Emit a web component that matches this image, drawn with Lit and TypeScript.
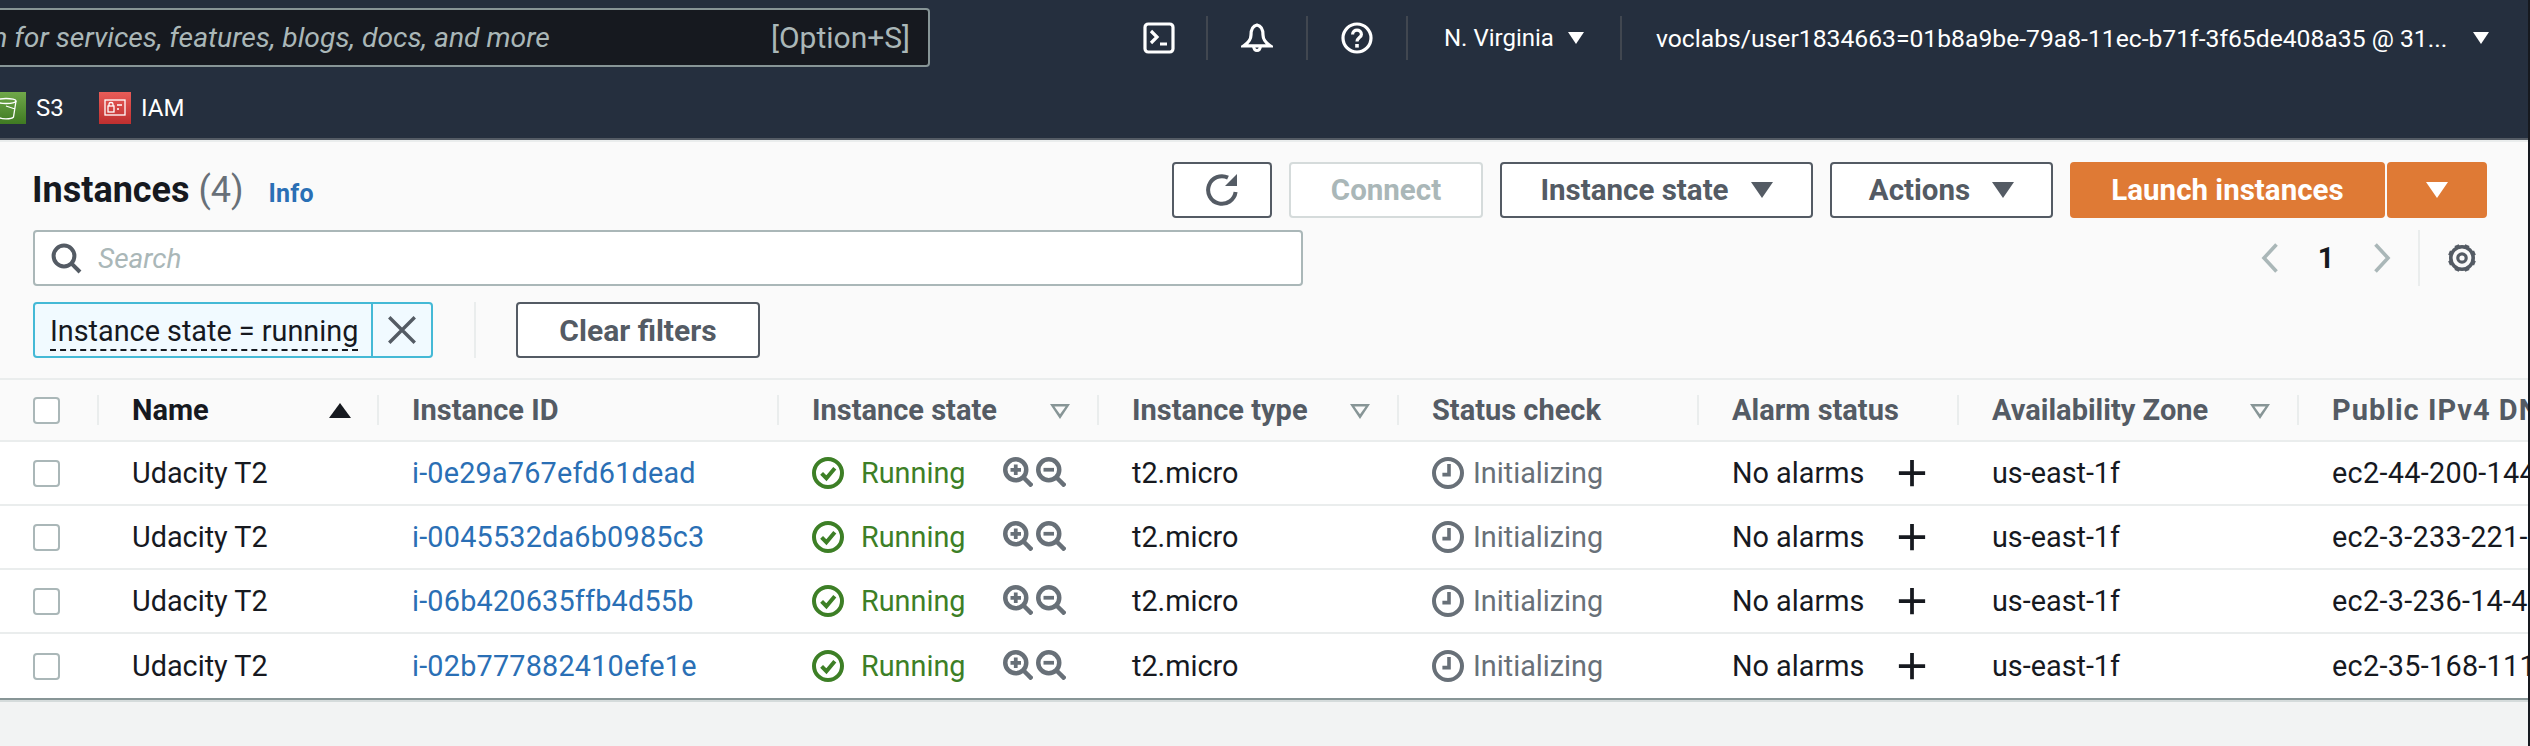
import { LitElement, css, html, svg } from 'lit'
import { customElement } from 'lit/decorators.js'

type Instance = {
  id: string;
  dns: string;
}

const instances: Instance[] = [
  { id: 'i-0e29a767efd61dead', dns: 'ec2-44-200-144-21.compute-1.amazonaws.com' },
  { id: 'i-0045532da6b0985c3', dns: 'ec2-3-233-221-84.compute-1.amazonaws.com' },
  { id: 'i-06b420635ffb4d55b', dns: 'ec2-3-236-14-47.compute-1.amazonaws.com' },
  { id: 'i-02b777882410efe1e', dns: 'ec2-35-168-111-9.compute-1.amazonaws.com' },
];

const icon = (body: unknown, cls = 'icon') => html`<svg class=${cls} viewBox="0 0 16 16" fill="none" stroke="currentColor" stroke-width="1.6">${body}</svg>`;

const terminalIcon = () => icon(svg`<rect x="1" y="1" width="14" height="14" rx="1.6"/><path d="M4 4.5 7 7.5 4 10.500M8.500 11H12"/>`);
const bellIcon = () => icon(svg`<path d="M8 1.500C5.600 2 5 4 5 6.500c0 2-1.200 3.800-3.600 5.400h13.200C12.200 10.300 11 8.500 11 6.500 11 4 10.400 2 8 1.500ZM6.300 12c0 3 3.400 3 3.400 0"/>`);
const helpIcon = () => icon(svg`<circle cx="8" cy="8" r="7"/><path d="M5.800 6.200C5.800 3.400 10.200 3.400 10.200 6.200 10.200 7.800 8 7.800 8 9.800"/><path d="M8 11v1.800" stroke-width="1.800"/>`);
const searchIcon = () => icon(svg`<circle cx="7" cy="7" r="5.200" stroke-width="2"/><path d="M10.800 10.800 15 15" stroke-width="2"/>`);
const refreshIcon = () => icon(svg`<path d="M14.800 9A6.900 6.900 0 1 1 11 1.800" stroke-width="2"/><path d="M15.500 0v6h-6Z" fill="currentColor" stroke="none"/>`);
const closeIcon = () => icon(svg`<path d="M2 2 14 14M14 2 2 14"/>`);
const gearTeeth = [22.5, 67.5, 112.5, 157.5, 202.5, 247.5, 292.5, 337.5].map(deg => {
  const a = deg * Math.PI / 180;
  return svg`<path d="M${8 + 5.5 * Math.cos(a)} ${8 + 5.5 * Math.sin(a)}L${8 + 7 * Math.cos(a)} ${8 + 7 * Math.sin(a)}" stroke-width="2.300"/>`;
});
const gearIcon = () => icon(svg`<circle cx="8" cy="8" r="5.600" stroke-width="1.800"/><circle cx="8" cy="8" r="2.100" stroke-width="1.600"/>${gearTeeth}`);
const checkIcon = () => icon(svg`<circle cx="8" cy="8" r="7" stroke-width="2"/><path d="M4.800 8.200 7.200 10.600 11.400 5.600" stroke-width="2"/>`);
const clockIcon = () => icon(svg`<circle cx="8" cy="8" r="7" stroke-width="2"/><path d="M8.500 3.500V8.800H5.200" stroke-width="1.800"/>`);
const zoomIn = () => icon(svg`<circle cx="6.800" cy="6.800" r="5.600" stroke-width="2.400"/><path d="M10.800 10.800 15.500 15.500" stroke-width="2.400"/><path d="M4 6.800h5.600M6.800 4v5.600" stroke-width="2"/>`, 'zoom');
const zoomOut = () => icon(svg`<circle cx="6.800" cy="6.800" r="5.600" stroke-width="2.400"/><path d="M10.800 10.800 15.500 15.500" stroke-width="2.400"/><path d="M4 6.800h5.600" stroke-width="2"/>`, 'zoom');
const plusIcon = () => icon(svg`<path d="M8 1v14M1 8h14" stroke-width="2"/>`, 'plus');
const chevron = (d: string) => html`<svg class="chev" viewBox="0 0 20 32" fill="none" stroke="currentColor" stroke-width="3.600"><path d=${d}/></svg>`;

const s3Icon = svg`<svg class="svc" viewBox="0 0 32 32" fill="none" stroke="#fff" stroke-width="1.300"><ellipse cx="14" cy="9" rx="10" ry="2.500"/><path d="M4 9l2.500 16c2 2.500 13 2.500 15 0L24 9M14 14l9 3"/></svg>`;
const iamIcon = svg`<svg class="svc" viewBox="0 0 32 32" fill="none" stroke="#fff" stroke-width="1.300"><rect x="6" y="8" width="20" height="15"/><rect x="9" y="14" width="6" height="6"/><path d="M10 14v-2c0-2 4-2 4 0v2M18 13h5M18 17h2"/></svg>`;

@customElement('app-root')
export default class AppRoot extends LitElement {
  render() {
    return html`
    <header>
      <div class="top">
        <div class="search-box">
          <span class="placeholder">Search for services, features, blogs, docs, and more</span>
          <span class="shortcut">[Option+S]</span>
        </div>
        <div class="nav">
          <span class="nav-icon">${terminalIcon()}</span>
          <span class="nav-icon">${bellIcon()}</span>
          <span class="nav-icon">${helpIcon()}</span>
          <span class="region">N. Virginia <i class="caret small"></i></span>
          <span class="user">voclabs/user1834663=01b8a9be-79a8-11ec-b71f-3f65de408a35 @ 31... <i class="caret small"></i></span>
        </div>
      </div>
      <div class="shortcuts">
        <span class="svc-wrap s3">${s3Icon}</span><span class="svc-name s3-name">S3</span>
        <span class="svc-wrap iam">${iamIcon}</span><span class="svc-name">IAM</span>
      </div>
    </header>
    <main>
      <div class="toolbar">
        <h1>Instances <span class="count">(4)</span></h1>
        <a class="info">Info</a>
        <div class="actions">
          <button class="refresh">${refreshIcon()}</button>
          <button class="disabled connect">Connect</button>
          <button class="state">Instance state <i class="caret"></i></button>
          <button class="acts">Actions <i class="caret"></i></button>
          <button class="primary launch">Launch instances</button>
          <button class="primary more"><i class="caret"></i></button>
        </div>
      </div>
      <div class="search-row">
        <div class="search">${searchIcon()}<span>Search</span></div>
        <div class="pager">
          <span class="chev-wrap">${chevron('M16.500 2.500 4 16l12.500 13.500')}</span>
          <span class="page">1</span>
          <span class="chev-wrap">${chevron('M3.500 2.500 16 16 3.500 29.500')}</span>
          <span class="gear">${gearIcon()}</span>
        </div>
      </div>
      <div class="filter-row">
        <div class="token">
          <span class="token-label"><span>Instance state = running</span></span>
          <span class="token-x">${closeIcon()}</span>
        </div>
        <span class="filter-div"></span>
        <button class="clear">Clear filters</button>
      </div>
      <div class="table">
        <div class="row head">
          <div class="cell"><span class="box"></span></div>
          <div class="cell strong">Name<i class="sort"></i></div>
          <div class="cell">Instance ID</div>
          <div class="cell">Instance state<i class="tri"></i></div>
          <div class="cell">Instance type<i class="tri"></i></div>
          <div class="cell">Status check</div>
          <div class="cell">Alarm status</div>
          <div class="cell">Availability Zone<i class="tri"></i></div>
          <div class="cell wide">Public IPv4 DNS</div>
        </div>
        ${instances.map(item => html`
        <div class="row">
          <div class="cell"><span class="box"></span></div>
          <div class="cell">Udacity T2</div>
          <div class="cell"><a>${item.id}</a></div>
          <div class="cell running">${checkIcon()}<span>Running</span><span class="zooms">${zoomIn()}${zoomOut()}</span></div>
          <div class="cell">t2.micro</div>
          <div class="cell pending">${clockIcon()}<span>Initializing</span></div>
          <div class="cell">No alarms${plusIcon()}</div>
          <div class="cell">us-east-1f</div>
          <div class="cell dns">${item.dns}</div>
        </div>
        `)}
      </div>
    </main>
    `
  }

  static styles = css`
:host {
  display: block;
  box-sizing: border-box;
  width: 2530px;
  height: 746px;
  overflow: hidden;
  background: #f2f3f3;
  border-right: 2px solid #16191f;
  font-family: Roboto, sans-serif;
  font-size: 28.8px;
  color: #16191f;
}
* {
  box-sizing: border-box;
}
i {
  display: inline-block;
}
.icon {
  width: 32px;
  height: 32px;
  flex: none;
}
header {
  height: 142px;
  background: #252f3e;
  border-bottom: 2px solid #eaeded;
  box-shadow: inset 0 -2px 0 #545b64;
  padding-bottom: 4px;
}
.top {
  display: flex;
  align-items: flex-start;
  padding-top: 8px;
}
.search-box {
  width: 930px;
  height: 59px;
  background: #16191f;
  border: 2px solid #879596;
  border-left: none;
  border-radius: 0 4px 4px 0;
  display: flex;
  justify-content: space-between;
  align-items: center;
  padding: 0 18px 0 0;
  color: #aab7b8;
  overflow: hidden;
  white-space: nowrap;
}
.placeholder {
  font-style: italic;
  font-size: 28.3px;
  margin-left: -77px;
}
.shortcut {
  font-size: 30px;
}
.nav {
  display: flex;
  align-items: center;
  color: #fff;
  margin-left: 213px;
  margin-top: 8px;
  height: 44px;
  font-size: 24px;
}
.nav-icon {
  width: 100px;
  height: 44px;
  display: flex;
  justify-content: center;
  align-items: center;
  border-right: 2px solid #414750;
}
.nav-icon:first-child {
  width: 65px;
  justify-content: flex-start;
}
.region {
  width: 214px;
  padding-left: 36px;
  border-right: 2px solid #414750;
  height: 44px;
  display: flex;
  align-items: center;
  gap: 14px;
  white-space: nowrap;
}
.user {
  padding-left: 34px;
  display: flex;
  align-items: center;
  gap: 26px;
  white-space: nowrap;
  font-size: 24.7px;
}
.caret {
  width: 0;
  height: 0;
  border-left: 11px solid transparent;
  border-right: 11px solid transparent;
  border-top: 16px solid currentColor;
}
.caret.small {
  border-left-width: 8px;
  border-right-width: 8px;
  border-top-width: 12px;
}
.shortcuts {
  display: flex;
  align-items: center;
  margin-top: 25px;
  height: 32px;
  color: #fff;
  font-size: 24px;
}
.svc-wrap {
  width: 32px;
  height: 32px;
  flex: none;
  overflow: hidden;
}
.svc-wrap.s3 {
  width: 26px;
  background: linear-gradient(#70a84a, #3f7a22);
}
.svc-wrap.iam {
  background: linear-gradient(#e85c58, #bf2f2f);
}
.svc {
  display: block;
  width: 32px;
  height: 32px;
}
.s3 .svc {
  margin-left: -8px;
}
.svc-name {
  margin-left: 10px;
}
.s3-name {
  width: 63px;
}
main {
  background: #fafafa;
  display: flex;
  flex-direction: column;
  padding-top: 20px;
}
.toolbar {
  display: flex;
  align-items: center;
  height: 56px;
  padding: 0 41px 0 32px;
}
h1 {
  margin: 0;
  font-size: 36px;
  font-weight: 700;
  line-height: 56px;
  white-space: nowrap;
}
.count {
  font-weight: 400;
  color: #687078;
}
.info {
  margin-left: 25px;
  margin-top: 6px;
  color: #2a6fb5;
  font-size: 25px;
  font-weight: 700;
}
.actions {
  margin-left: auto;
  display: flex;
  gap: 17px;
}
button {
  height: 56px;
  border: 2px solid #545b64;
  border-radius: 4px;
  background: #fff;
  color: #545b64;
  font: 700 29.5px Roboto, sans-serif;
  display: flex;
  align-items: center;
  justify-content: center;
  gap: 22px;
  padding: 0;
  white-space: nowrap;
}
.refresh {
  width: 100px;
}
.connect {
  width: 194px;
}
.state {
  width: 313px;
}
.acts {
  width: 223px;
}
.launch {
  width: 315px;
}
.more {
  width: 100px;
  margin-left: -15px;
}
button.disabled {
  color: #aab7b8;
  border-color: #d5dbdb;
}
button.primary {
  background: #df7a35;
  border-color: #df7a35;
  color: #fff;
}
.search-row {
  display: flex;
  align-items: center;
  justify-content: space-between;
  height: 56px;
  margin-top: 12px;
  padding: 0 50px 0 33px;
}
.search {
  width: 1270px;
  height: 56px;
  background: #fff;
  border: 2px solid #aab7b8;
  border-radius: 4px;
  display: flex;
  align-items: center;
  gap: 16px;
  padding-left: 15px;
  color: #545b64;
}
.search span {
  font-style: italic;
  font-size: 28px;
  color: #aab7b8;
}
.pager {
  display: flex;
  align-items: center;
  height: 56px;
}
.chev {
  display: block;
  width: 20px;
  height: 32px;
}
.chev-wrap {
  color: #aab7b8;
}
.page {
  width: 92px;
  text-align: center;
  font-weight: 700;
}
.gear {
  margin-left: 26px;
  padding-left: 26px;
  height: 56px;
  display: flex;
  align-items: center;
  border-left: 2px solid #eaeded;
  color: #545b64;
}
.filter-row {
  display: flex;
  align-items: center;
  height: 56px;
  margin-top: 16px;
  padding-left: 33px;
}
.token {
  width: 400px;
  height: 56px;
  display: flex;
  border: 2px solid #44b9d6;
  border-radius: 4px;
  background: #f1faff;
}
.token-label {
  width: 338px;
  padding-left: 15px;
  display: flex;
  align-items: center;
  white-space: nowrap;
  border-right: 2px solid #44b9d6;
}
.token-label span {
  border-bottom: 2px dashed #16191f;
  line-height: 36px;
  margin-top: 4px;
}
.token-x {
  flex: 1;
  display: flex;
  align-items: center;
  justify-content: center;
  color: #545b64;
}
.token-x .icon {
  width: 34px;
  height: 34px;
}
.filter-div {
  width: 2px;
  height: 56px;
  background: #eaeded;
  margin: 0 40px 0 41px;
}
.clear {
  width: 244px;
  font-size: 30px;
}
.table {
  margin-top: 20px;
  border-top: 2px solid #eaeded;
  background: #fff;
  border-bottom: 2px solid #879596;
  box-shadow: 0 2px 0 #d5dbdb;
}
.row {
  display: grid;
  grid-template-columns: 99px 280px 400px 320px 300px 300px 260px 340px 229px;
  height: 64px;
  border-bottom: 2px solid #eaeded;
  white-space: nowrap;
}
.row:last-child {
  border-bottom: none;
}
.row.head {
  height: 62px;
  background: #fafafa;
  color: #545b64;
  font-weight: 700;
  font-size: 29px;
}
.cell {
  display: flex;
  align-items: center;
  padding-left: 33px;
  position: relative;
  overflow: hidden;
}
.cell.wide {
  letter-spacing: 1px;
}
.cell.dns {
  letter-spacing: 0.3px;
}
.head .cell:not(:last-child)::after {
  content: "";
  position: absolute;
  right: 0;
  top: 15px;
  bottom: 15px;
  width: 2px;
  background: #eaeded;
}
.head .cell.strong {
  color: #16191f;
}
.box {
  width: 27px;
  height: 27px;
  border: 2px solid #aab7b8;
  border-radius: 4px;
  background: #fff;
}
.sort, .tri {
  position: absolute;
  width: 0;
  height: 0;
}
.sort {
  right: 28px;
  top: 23px;
  border-left: 11px solid transparent;
  border-right: 11px solid transparent;
  border-bottom: 15px solid #16191f;
}
.tri {
  right: 29px;
  top: 24px;
  width: 20px;
  height: 15px;
  background: #879596;
  clip-path: polygon(0 0, 100% 0, 50% 100%, 0 0, 22% 16%, 50% 68%, 78% 16%, 22% 16%);
}
a {
  color: #2a6fb5;
  letter-spacing: 0.2px;
}
.running {
  color: #3d7f26;
  overflow: visible;
}
.running span:first-of-type {
  margin-left: 17px;
}
.zooms {
  display: flex;
  gap: 3px;
  margin-left: 37px;
  color: #687078;
}
.zoom {
  width: 30px;
  height: 30px;
  margin-top: -2px;
}
.pending {
  color: #687078;
  gap: 9px;
}
.plus {
  width: 30px;
  height: 30px;
  margin-left: 33px;
  color: #16191f;
}
`
}

declare global {
  interface HTMLElementTagNameMap {
    'app-root': AppRoot
  }
}
